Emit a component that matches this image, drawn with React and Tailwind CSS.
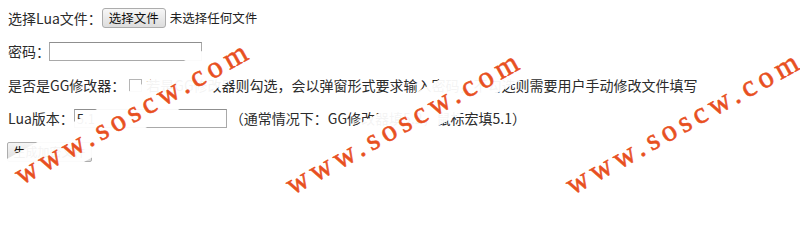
import React from "react";

const font = { fontFamily: '"Noto Sans CJK SC", "Noto Sans", sans-serif' };

function Watermark({ className }) {
  return (
    <div
      className={`absolute -translate-x-1/2 -translate-y-1/2 -rotate-[29deg] bg-white/95 px-[8px] py-[6px] whitespace-nowrap font-['Liberation_Serif',serif] text-[30px] leading-[28px] font-normal tracking-[5px] text-[#e8501f] [-webkit-text-stroke:0.6px_#e8501f] ${className}`}
    >
      www.soscw.com
    </div>
  );
}

export default function App() {
  return (
    <div className="relative w-[800px] h-[235px] overflow-hidden bg-white text-[14px] text-[#2b2b2b]" style={font}>
      <div className="flex flex-col gap-[13.5px] pt-[8px] pl-[8px]">
        <div className="flex h-[20px] items-center">
          <span>选择Lua文件：</span>
          <span className="flex h-[20px] items-center rounded-[3px] border border-[#acacac] bg-gradient-to-b from-[#f7f7f7] to-[#dddddd] px-[6px] text-[12.5px] text-[#111]">选择文件</span>
          <span className="ml-[4px] text-[12.5px] text-[#222]">未选择任何文件</span>
        </div>
        <div className="flex h-[20px] items-center">
          <span>密码：</span>
          <span className="ml-[-1px] h-[19px] w-[153px] border border-[#a9a9a9] border-t-[#8f8f8f] bg-white"></span>
        </div>
        <div className="flex h-[20px] items-center">
          <span>是否是GG修改器：</span>
          <span className="ml-[4px] mr-[4px] h-[13px] w-[13px] border border-[#b5b5b5] bg-white"></span>
          <span>若是GG修改器则勾选，会以弹窗形式要求输入密码，不勾选则需要用户手动修改文件填写</span>
        </div>
        <div className="flex h-[20px] items-center">
          <span>Lua版本：</span>
          <span className="flex h-[19px] w-[153px] items-center border border-[#a9a9a9] border-t-[#8f8f8f] bg-white pl-[2px] text-[13px]">5.1</span>
          <span className="ml-[3px]">（通常情况下：GG修改器填5.2，鼠标宏填5.1）</span>
        </div>
        <div className="flex h-[20px] items-center">
          <span className="ml-[-1px] flex h-[20px] w-[85px] items-center justify-center rounded-[2px] border border-[#adadad] bg-gradient-to-b from-[#f6f6f6] to-[#dcdcdc] text-[12px] text-[#111]">生成加密文件</span>
        </div>
      </div>
      <Watermark className="left-[133px] top-[112px]" />
      <Watermark className="left-[404px] top-[122px]" />
      <Watermark className="left-[684px] top-[122px]" />
    </div>
  );
}
